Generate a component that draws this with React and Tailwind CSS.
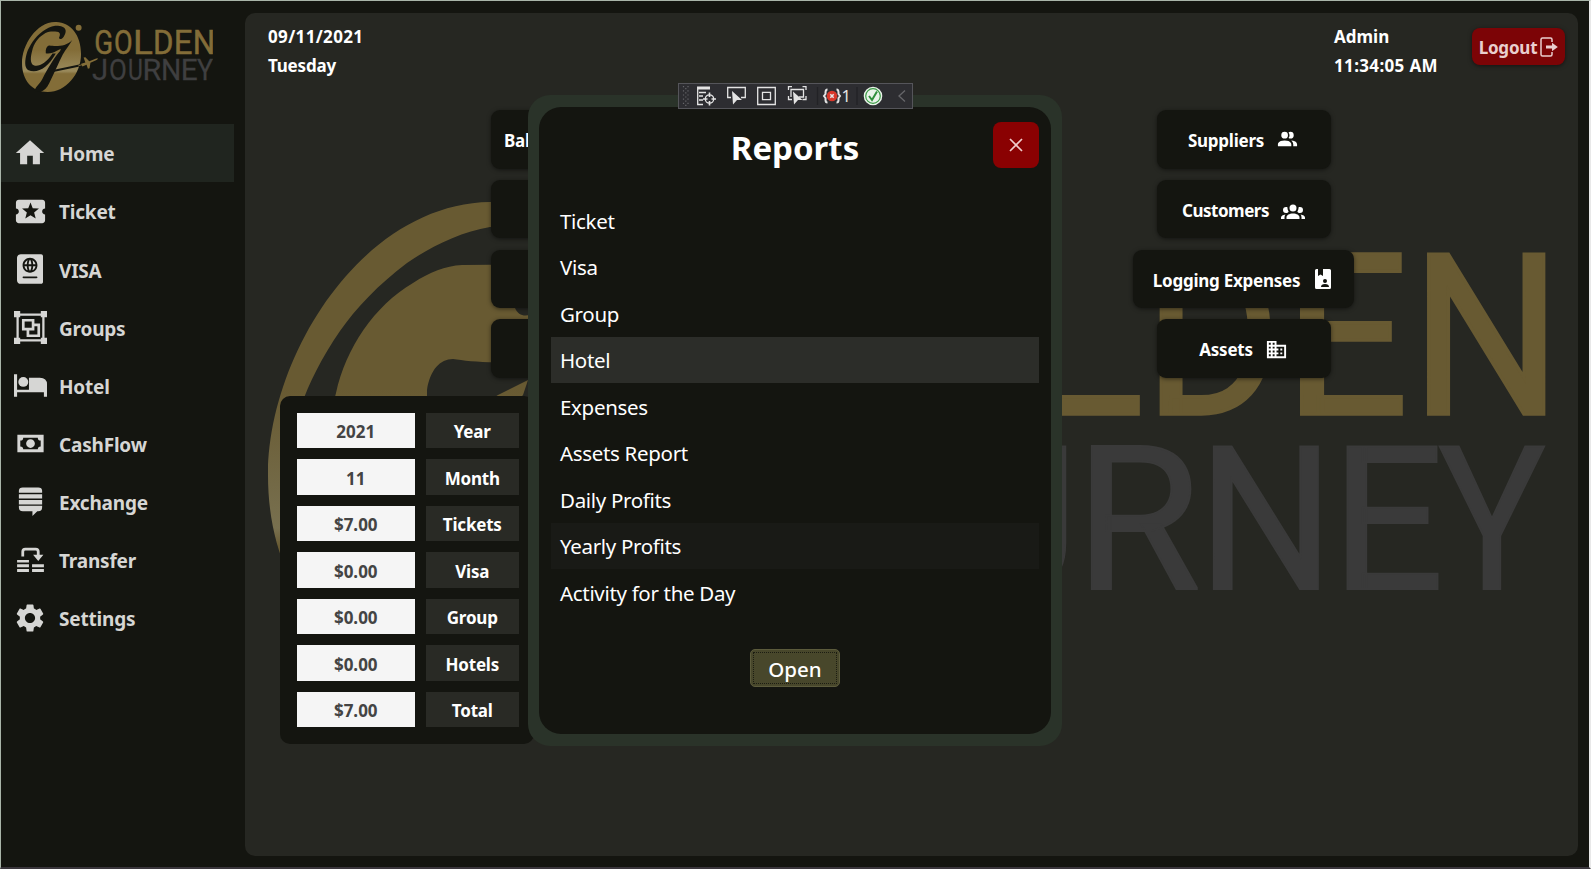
import React from "react";
import { MdHome, MdLocalActivity, MdSettings, MdDomain } from "react-icons/md";
import { FaPassport } from "react-icons/fa";

// [glyph, left edge, drawn width, left bearing and ink width in 1/2048 em]
const GOLDEN = [
  ["G", 759, 107, 106, 1144], ["O", 893, 107, 118, 1172], ["L", 1030, 111, 169, 893],
  ["D", 1159.5, 112.5, 169, 1069], ["E", 1300, 103, 169, 926], ["N", 1427, 118.5, 169, 1120],
];
const JOURNEY = [
  ["J", 741, 89, 52, 911], ["O", 859, 101, 118, 1172], ["U", 986, 80, 141, 1045],
  ["R", 1090.8, 103.7, 169, 1025], ["N", 1212.8, 106, 169, 1120], ["E", 1346.5, 92, 169, 926], ["Y", 1438.6, 107, 14, 1202],
];

function Word({ letters, y, size, color, stroke }) {
  return letters.map(([ch, left, width, bearing, ink]) => {
    const s = (width - stroke) / ((ink / 2048) * size);
    return (
      <text key={ch} x={(-bearing / 2048) * size} y="0" fontSize={size} fill={color} stroke={color} strokeWidth={stroke}
        transform={`translate(${left + stroke / 2} ${y}) scale(${s} 1)`}>{ch}</text>
    );
  });
}

function Logo({ id, className, gold, goldLight, grey, bg }) {
  const fill = `url(#${id})`;
  return (
    <svg className={className} viewBox="268 202 1278 466" preserveAspectRatio="none" aria-hidden="true">
      <defs>
        <linearGradient id={id} x1="0" y1="202" x2="0" y2="668" gradientUnits="userSpaceOnUse">
          <stop offset="0" stopColor={gold} />
          <stop offset="0.4" stopColor={gold} />
          <stop offset="0.7" stopColor={goldLight} />
          <stop offset="0.74" stopColor={gold} />
          <stop offset="1" stopColor={gold} />
        </linearGradient>
      </defs>
      <path fill={fill} d="M490 202C362 204 268 356 268 475C268 590 335 668 440 668C560 668 663 550 663 415C663 285 590 200 490 202Z" />
      <g fill={bg}>
        <path d="M515 308C520 320 535 318 547 300C572 262 568 225 490 227C460 232 430 247 407 263C378 285 356 308 340 331C322 357 308 385 302 404C285 460 284 505 308 522C370 548 440 510 494 412L472 412C430 475 385 500 350 492C318 480 326 430 336 393C346 348 374 306 413 283C430 272 445 266 462 265L490 264.7C528 266 526 285 515 308Z" />
        <path d="M427 410L427 390C430 370 440 359 453 359C480 363 560 372 604 322C590 350 560 385 540 420C515 470 480 550 450 610C435 640 415 662 390 668L355 662C350 640 385 620 405 580C440 510 490 430 523 395L528 380L498 395C480 408 445 416 427 410Z" />
      </g>
      <path d="M460 532L660 490" stroke={bg} strokeWidth="13" />
      <path d="M645 494L690 480" stroke={gold} strokeWidth="6" />
      <path fill={gold} d="M664 480L692 472L680 438L692 436L718 464L760 446Q776 440 776 446Q772 454 760 458L726 474L720 510L709 513L700 486L672 498Z" />
      <circle cx="647" cy="240" r="20" fill={gold} />
      <g fontFamily="Roboto, sans-serif">
        <Word letters={GOLDEN} y={413.6} size={224} color={gold} stroke={3.4} />
        <Word letters={JOURNEY} y={589.1} size={200.5} color={grey} stroke={1.8} />
      </g>
    </svg>
  );
}

const S = (props) => <svg viewBox="0 0 32 32" fill="currentColor" {...props} />;
const M = (props) => <svg viewBox="0 0 24 24" fill="currentColor" {...props} />;

const GroupsIcon = (p) => (
  <S {...p}>
    <path d="M4 3.5H28M4 28.5H28M3.5 4V28M28.5 4V28" stroke="currentColor" strokeWidth="2.2" />
    <path d="M0 0h6v6H0zM26 0h6v6h-6zM0 26h6v6H0zM26 26h6v6h-6z" />
    <path d="M9 9h9.5v8.500H9zM18.500 13.500H24V24H13.500V18" fill="none" stroke="currentColor" strokeWidth="2.600" />
  </S>
);
const BedIcon = (p) => (
  <S {...p}>
    <path d="M0 5h3v15h26v-6h3v13h-3v-4.500H3V27H0zM14.500 8.500H25Q32 8.500 32 15V20H14.500z" />
    <circle cx="9" cy="12.500" r="4.800" />
  </S>
);
const CashIcon = (p) => (
  <M {...p}>
    <path d="M3 6h18v12H3V6m9 3a3 3 0 0 1 3 3a3 3 0 0 1-3 3a3 3 0 0 1-3-3a3 3 0 0 1 3-3M7 8a2 2 0 0 1-2 2v4a2 2 0 0 1 2 2h10a2 2 0 0 1 2-2v-4a2 2 0 0 1-2-2H7z" />
  </M>
);
const ExchangeIcon = (p) => (
  <S {...p}>
    <path d="M4 7V5Q4 1.500 8 1.500H24Q28 1.500 28 5V7zM4 8.500H28V13H4zM4 14.500H28V19H4zM4 20.500H28V22Q28 26 24 26H23L18 31V26H8Q4 26 4 22z" />
  </S>
);
const TransferIcon = (p) => (
  <S {...p}>
    <path d="M8.500 13V8.500Q8.500 6 11 6H21Q23.500 6 23.500 8.500V12" fill="none" stroke="currentColor" strokeWidth="2.700" />
    <path d="M18.500 11.500H28.500L23.500 17.500zM3 16.500H14.500V19H3zM3 20.500H14.500V23.500H3zM3 25.200H14.500V28H3zM17.500 20.500H29V23.500H17.500zM17.500 25.200H29V28H17.500z" />
  </S>
);
const PeopleIcon = (p) => (
  <M {...p}>
    <path d="M16 17V19H2V17S2 13 9 13 16 17 16 17M12.5 7.5A3.5 3.5 0 1 0 9 11A3.5 3.5 0 0 0 12.5 7.5M15.94 13A5.32 5.32 0 0 1 18 17V19H22V17S22 13.37 15.94 13M15 4A3.39 3.39 0 0 0 13.07 4.59A5 5 0 0 1 13.07 10.41A3.39 3.39 0 0 0 15 11A3.5 3.5 0 0 0 15 4Z" />
  </M>
);
const CrowdIcon = (p) => (
  <M {...p}>
    <path d="M12 5.5A3.5 3.5 0 0 1 15.5 9 3.5 3.5 0 0 1 12 12.5 3.5 3.5 0 0 1 8.5 9 3.5 3.5 0 0 1 12 5.5M5 8C5.56 8 6.08 8.15 6.53 8.42 6.38 9.85 6.8 11.27 7.66 12.38 7.16 13.34 6.16 14 5 14A3 3 0 0 1 2 11 3 3 0 0 1 5 8M19 8A3 3 0 0 1 22 11 3 3 0 0 1 19 14C17.84 14 16.84 13.34 16.34 12.38 17.2 11.27 17.62 9.85 17.47 8.42 17.92 8.15 18.44 8 19 8M5.5 18.25C5.5 16.18 8.41 14.5 12 14.5S18.5 16.18 18.5 18.25V20H5.5V18.25M0 20V18.5C0 17.11 1.89 15.94 4.45 15.6 3.86 16.28 3.5 17.22 3.5 18.25V20H0M24 20H20.5V18.25C20.5 17.22 20.14 16.28 19.55 15.6 22.11 15.94 24 17.11 24 18.5V20Z" />
  </M>
);
const BookIcon = (p) => (
  <svg viewBox="0 0 16 20" {...p}>
    <path fill="currentColor" d="M1.500 0H3V7L5.500 5.500L8 7V0H14.500Q16 0 16 1.500V18.500Q16 20 14.500 20H1.500Q0 20 0 18.500V1.500Q0 0 1.500 0z" />
    <circle cx="10" cy="12" r="2" fill="#141510" />
    <path d="M6 18Q6 15 10 15Q14 15 14 18z" fill="#141510" />
  </svg>
);
const LogoutIcon = (p) => (
  <svg viewBox="0 0 18 20" fill="none" stroke="currentColor" strokeWidth="1.500" {...p}>
    <path d="M12 5V2.500Q12 1 10.500 1H2.500Q1 1 1 2.500V17.500Q1 19 2.500 19H10.500Q12 19 12 17.500V15" />
    <path d="M6 10H13" strokeWidth="3" />
    <path d="M12 5.800L17.800 10L12 14.200z" fill="currentColor" stroke="none" />
  </svg>
);

const nav = [
  { label: "Home", icon: <MdHome className="size-[34px]" />, active: true },
  { label: "Ticket", icon: <MdLocalActivity className="size-[35px]" /> },
  { label: "VISA", icon: <FaPassport className="h-[30px] w-[26px]" /> },
  { label: "Groups", icon: <GroupsIcon className="size-[33px]" /> },
  { label: "Hotel", icon: <BedIcon className="size-[33px]" /> },
  { label: "CashFlow", icon: <CashIcon className="size-[35px]" /> },
  { label: "Exchange", icon: <ExchangeIcon className="size-[31px]" /> },
  { label: "Transfer", icon: <TransferIcon className="size-[33px]" /> },
  { label: "Settings", icon: <MdSettings className="size-[34px]" /> },
];

const stats = [
  ["2021", "Year"], ["11", "Month"], ["$7.00", "Tickets"], ["$0.00", "Visa"],
  ["$0.00", "Group"], ["$0.00", "Hotels"], ["$7.00", "Total"],
];

const reports = [
  { name: "Ticket" }, { name: "Visa" }, { name: "Group" }, { name: "Hotel", bg: "bg-[#2c2d29]" },
  { name: "Expenses" }, { name: "Assets Report" }, { name: "Daily Profits" },
  { name: "Yearly Profits", bg: "bg-[#191a16]" }, { name: "Activity for the Day" },
];

const tile = "flex h-[58.5px] items-center rounded-[9px] bg-[#141510] shadow-[0_1px_4px_rgba(0,0,0,0.5)]";

function DebugToolbar() {
  return (
    <div className="absolute left-[676.5px] top-[82px] h-[26px] w-[235px] border border-[#55555a] bg-[#2d2d31]">
      <svg className="block size-full" viewBox="0 0 233 24" fill="none" stroke="#e4e4e4" strokeWidth="1.300">
        <g stroke="#66666a" strokeWidth="1.200" strokeDasharray="1.200 3">
          <path d="M4.500 2V22M9 2V22" /><path d="M6.800 4V22" />
        </g>
        <path d="M18 4H31" strokeWidth="3" />
        <path d="M18.700 3V20.500H24M20 8.500H27M20 12H24M20 16H24" />
        <circle cx="30.500" cy="15" r="4.200" />
        <path d="M30.500 8.500V13M30.500 17V21.500M24 15H28.500M32.500 15H37" strokeWidth="1.600" />
        <path d="M52 13.500H48.700V3.500H66.300V13.500H62" />
        <path d="M53 7L63 16H58L54 20.500z" fill="#e4e4e4" stroke="none" />
        <path d="M78.700 3.500H96.300V20.500H78.700zM83.500 8.300H91.500V15.700H83.500z" />
        <path d="M109.500 6V2.700H113M123.500 2.700H127V6M109.500 12V15.500H113M127 12V15.500H123.500M112 13V5.500H124.500V13H120" />
        <path d="M114 7.500L123.500 16H119L115 20.500z" fill="#e4e4e4" stroke="none" />
        <path d="M138.500 3V21M178 3V21" stroke="#222226" />
        <path d="M148.500 5.500Q146.500 5.500 146.500 8.500V10L145 12L146.500 14V16Q146.500 18.500 148.500 18.500M157.500 5.500Q159.500 5.500 159.500 8.500V10L161 12L159.500 14V16Q159.500 18.500 157.500 18.500" strokeWidth="2" />
        <circle cx="153" cy="12" r="5.300" fill="#d9382b" stroke="none" />
        <path d="M151.300 10.300L154.700 13.700M154.700 10.300L151.300 13.700" strokeWidth="1.500" />
        <text x="162.500" y="18" fill="#e4e4e4" stroke="none" fontSize="16.500" fontFamily="Noto Sans, sans-serif">1</text>
        <circle cx="194" cy="12" r="8.300" fill="#e9f3e9" stroke="#e9f3e9" strokeWidth="2" />
        <circle cx="194" cy="12" r="7.300" stroke="#3c9a46" strokeWidth="1.200" />
        <path d="M190 12L193 16L198 7.500" stroke="#2f8f3b" strokeWidth="2" />
        <path d="M226 6.500L220 12L226 17.500" stroke="#66666a" />
      </svg>
    </div>
  );
}

export default function App() {
  return (
    <div className="relative flex h-[869px] w-[1591px] overflow-hidden border-b-2 border-l border-r-2 border-t border-b-[#3a363c] border-l-[#a9b5a9] border-r-[#e8e8e8] border-t-[#a9b5a9] bg-[#141510] font-['Noto_Sans','Open_Sans',sans-serif] text-white">
      <aside className="flex w-[244px] shrink-0 flex-col">
        <div className="h-[123px] pl-[21px] pt-[21px]">
          <Logo id="logoSmall" className="h-[70px] w-[191px]" gold="#836d38" goldLight="#9a8a5c" grey="#3f3f40" bg="#141510" />
        </div>
        <nav className="w-[232.500px]">
          {nav.map((n) => (
            <div key={n.label} className={`flex h-[58.130px] items-center text-[19px] font-bold tracking-[-0.200px] text-[#d6d6d4] ${n.active ? "bg-[#20251f]" : ""}`}>
              <span className="flex w-[58px] shrink-0 justify-center">{n.icon}</span>
              <span className="pt-[3px]">{n.label}</span>
            </div>
          ))}
        </nav>
      </aside>

      <main className="relative mt-[11.500px] h-[843px] w-[1332.500px] overflow-hidden rounded-[10px] bg-[#262722]">
        <Logo id="logoLarge" className="absolute left-[23px] top-[189.500px] h-[466px] w-[1278px]" gold="#685a32" goldLight="#78704f" grey="#3a3a3a" bg="#262722" />
        <div className="relative flex h-[97.500px] justify-between pl-[23px] pr-[12.500px] text-[17px] font-bold leading-[29px]">
          <div className="pt-[9px]">
            <p className="tracking-[0.350px]">09/11/2021</p>
            <p className="tracking-[-0.200px]">Tuesday</p>
          </div>
          <div className="flex items-start">
            <div className="w-[138px] pt-[9px]">
              <p>Admin</p>
              <p className="tracking-[0.350px]">11:34:05 AM</p>
            </div>
            <button className="mt-[15px] flex h-[37.500px] w-[93px] items-center justify-center gap-[3px] rounded-[8px] bg-[#7c0406] text-[#e9cfcf] shadow-[0_1px_4px_rgba(0,0,0,0.5)]">
              <span className="pt-[3px] font-bold tracking-[-0.200px]">Logout</span>
              <LogoutIcon className="mt-[1px] h-[20px] w-[18px]" />
            </button>
          </div>
        </div>

        <div className="relative flex justify-between pr-[223.500px]">
          <div className="flex flex-col gap-[11.300px] pl-[246px]">
            <div className={`${tile} w-[174px] pl-[13px] pt-[3px] text-[17px] font-bold tracking-[-0.300px]`}>Balance</div>
            <div className={`${tile} w-[174px]`} />
            <div className={`${tile} w-[174px]`} />
            <div className={`${tile} w-[174px]`} />
          </div>
          <div className="flex w-[221px] flex-col items-center gap-[11.300px] text-[17px] font-bold tracking-[-0.250px]">
            <div className={`${tile} w-[174px] justify-center gap-[12px] pt-[3px]`}>Suppliers <PeopleIcon className="mb-[3px] size-[23px]" /></div>
            <div className={`${tile} w-[174px] justify-center gap-[12px] pt-[3px] tracking-[-0.500px]`}>Customers <CrowdIcon className="size-[24px]" /></div>
            <div className={`${tile} w-[221px] justify-center gap-[15px] pr-[3px] pt-[3px]`}>Logging Expenses <BookIcon className="mb-[3px] h-[20px] w-[16px]" /></div>
            <div className={`${tile} w-[174px] justify-center gap-[12px] pt-[3px]`}>Assets <MdDomain className="mb-[1px] size-[23px]" /></div>
          </div>
        </div>

        <div className="relative ml-[35px] mt-[18px] flex h-[348px] w-[254px] flex-col gap-[11px] rounded-[10px] bg-[#141510] pl-[17px] pt-[17px] text-[17px] font-bold">
          {stats.map(([v, l]) => (
            <div key={l} className="flex h-[35.500px] gap-[11px]">
              <span className="flex w-[117.500px] items-center justify-center bg-[#f5f5f5] pt-[3px] text-[#444444]">{v}</span>
              <span className="flex w-[93.500px] items-center justify-center bg-[#292a25] pt-[3px] tracking-[-0.200px]">{l}</span>
            </div>
          ))}
        </div>
      </main>

      <div className="absolute left-[527px] top-[94px] flex h-[651px] w-[534px] rounded-[22px] bg-[#2a3329] px-[11px] py-[12px]">
        <section className="relative flex flex-1 flex-col items-center rounded-[22px] bg-[#141510] pt-[14px]">
          <h1 className="text-[33px] font-bold leading-[54px]">Reports</h1>
          <button className="absolute right-[12px] top-[14.500px] flex size-[46.500px] items-center justify-center rounded-[8px] bg-[#8a0102] text-[#f0cccc]">
            <svg viewBox="0 0 14 14" className="size-[14px]" stroke="currentColor" strokeWidth="1.700"><path d="M1 1L13 13M13 1L1 13" /></svg>
          </button>
          <ul className="mt-[22px] w-[488px] text-[20.500px] tracking-[-0.320px]">
            {reports.map((r) => (
              <li key={r.name} className={`flex h-[46.500px] items-center pl-[9px] pt-[2px] ${r.bg || ""}`}>{r.name}</li>
            ))}
          </ul>
          <button className="mt-[33px] flex h-[38px] w-[90px] rounded-[5px] border border-[#5c5b3c] bg-[#48472b] p-[2px] text-[20.500px] font-medium">
            <span className="flex flex-1 items-center justify-center border border-dotted border-[#1c1d12] pt-[4px]">Open</span>
          </button>
        </section>
      </div>

      <DebugToolbar />
    </div>
  );
}
